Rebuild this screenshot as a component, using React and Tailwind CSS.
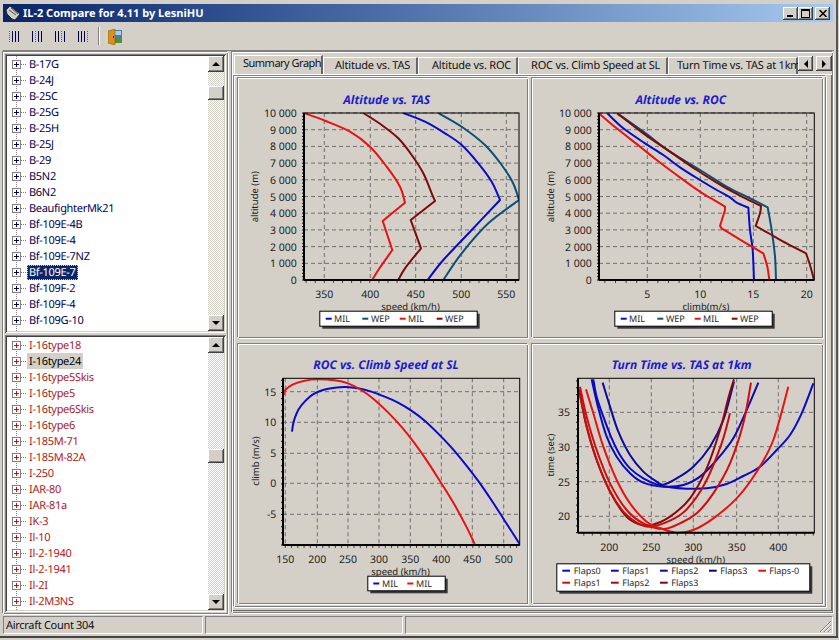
import React from "react";

const raised =
  "shadow-[inset_-1px_-1px_0_#404040,inset_1px_1px_0_#ffffff,inset_-2px_-2px_0_#808080,inset_2px_2px_0_#d4d0c8]";
const sunken =
  "shadow-[inset_1px_1px_0_#808080,inset_-1px_-1px_0_#ffffff,inset_2px_2px_0_#404040,inset_-2px_-2px_0_#d4d0c8]";
const groove =
  "shadow-[inset_1px_1px_0_#ffffff,inset_-1px_-1px_0_#808080,-1px_-1px_0_#808080,1px_1px_0_#ffffff]";

const tree1 = [
  "B-17G", "B-24J", "B-25C", "B-25G", "B-25H", "B-25J", "B-29", "B5N2", "B6N2",
  "BeaufighterMk21", "Bf-109E-4B", "Bf-109E-4", "Bf-109E-7NZ", "Bf-109E-7",
  "Bf-109F-2", "Bf-109F-4", "Bf-109G-10", "Bf-109G-14",
];
const tree2 = [
  "I-16type18", "I-16type24", "I-16type5Skis", "I-16type5", "I-16type6Skis", "I-16type6",
  "I-185M-71", "I-185M-82A", "I-250", "IAR-80", "IAR-81a", "IK-3", "Il-10",
  "Il-2-1940", "Il-2-1941", "Il-2I", "Il-2M3NS",
];

const BLUE = "#0a0acb";
const TEAL = "#0c4f78";
const RED = "#e81212";
const DARK = "#7d0a0a";

// curves are read off the reference at 3x, ox/oy move them back to page pixels
const toPage = (pts, ox, oy) => pts.map(([x, y, c]) => [ox + x / 3, oy + y / 3, c]);

// a third value on a point (1) marks a sharp corner, the rest is smoothed
const linePath = (pts) => {
  let d = `M${pts[0][0]} ${pts[0][1]}`;
  for (let i = 0; i < pts.length - 1; i++) {
    const b = pts[i];
    const c = pts[i + 1];
    const a = b[2] ? b : pts[i - 1] || b;
    const e = c[2] ? c : pts[i + 2] || c;
    d += `C${b[0] + (c[0] - a[0]) / 6} ${b[1] + (c[1] - a[1]) / 6} ${c[0] - (e[0] - b[0]) / 6} ${c[1] - (e[1] - b[1]) / 6} ${c[0]} ${c[1]}`;
  }
  return d;
};

const altTicks = [0, 1, 2, 3, 4, 5, 6, 7, 8, 9, 10].map((k) => ({
  pos: 280 - k * 16.7,
  label: k === 0 ? "0" : k === 10 ? "10 000" : `${k} 000`,
}));

const charts = [
  {
    key: "tas",
    left: 238, top: 78, width: 290, height: 260,
    title: "Altitude vs. TAS", titleX: 386.7, titleY: 100,
    plot: { x0: 304, x1: 519, y0: 113, y1: 280 },
    xTicks: [[324.3, "350"], [370.3, "400"], [415.7, "450"], [461.3, "500"], [506.3, "550"]],
    yTicks: altTicks,
    yRight: 296.7, xTickY: 294,
    xTitle: "speed (km/h)", xTitleX: 410.5, xTitleY: 307.3,
    yTitle: "altitude (m)", yTitleX: 255, yTitleY: 196.7,
    minorX: 9.1, minorY: 3.34,
    legend: { x: 319.3, y: 310.7, w: 157.4, h: 15 },
    items: [[325.7, 331.7, 334, "MIL", BLUE, 0], [362.3, 368.3, 371, "WEP", TEAL, 0], [399.7, 405.7, 408, "MIL", RED, 0], [436.7, 442.5, 445, "WEP", DARK, 0]],
    series: [
      { color: RED, pts: [[304, 113], [325, 120.7], [350, 131.7], [370, 146.7], [386.7, 166.7], [400, 186.7], [405, 202.7, 1], [382.7, 221, 1], [392.3, 250, 1], [378.3, 270], [372.3, 280]] },
      { color: DARK, pts: [[363.3, 113], [381.7, 125], [398.3, 138.3], [411.7, 155], [423.3, 173.3], [431.7, 193.3], [435, 201, 1], [410.7, 220, 1], [421, 248.3, 1], [405, 268.3], [398.3, 280]] },
      { color: BLUE, pts: [[403.3, 113], [425, 121.7], [445, 133.3], [461.7, 145], [478.3, 163.3], [491.7, 181.7], [500, 200, 1], [471.7, 230], [443.3, 260], [427.7, 280]] },
      { color: TEAL, pts: [[438.3, 113], [461.7, 126.7], [485, 145], [501.7, 165], [513, 183], [519, 200, 1], [488.3, 223.3], [461.7, 253.3], [443.3, 280]] },
    ],
  },
  {
    key: "roc",
    left: 532, top: 78, width: 291, height: 260,
    title: "Altitude vs. ROC", titleX: 680.8, titleY: 100,
    plot: { x0: 599, x1: 814.3, y0: 113, y1: 280 },
    xTicks: [[647.3, "5"], [700.3, "10"], [753.3, "15"], [806.7, "20"]],
    yTicks: altTicks,
    yRight: 591.7, xTickY: 294,
    xTitle: "climb(m/s)", xTitleX: 706, xTitleY: 307.3,
    yTitle: "altitude (m)", yTitleX: 550.7, yTitleY: 196.7,
    minorX: 10.6, minorY: 3.34,
    legend: { x: 614.3, y: 310.7, w: 157.4, h: 15 },
    items: [[620.7, 626.7, 629, "MIL", BLUE, 0], [657.3, 663.3, 666, "WEP", TEAL, 0], [694.7, 700.7, 703, "MIL", RED, 0], [731.7, 737.5, 740, "WEP", DARK, 0]],
    series: [
      { color: BLUE, z: [[232, 70], [280, 115], [345, 160], [400, 195], [450, 232], [510, 270], [560, 300], [600, 322], [620, 338], [655, 353, 1], [660, 420], [668, 480], [672, 570]] },
      { color: TEAL, z: [[262, 70], [340, 125], [420, 185], [510, 240], [590, 290], [650, 320], [680, 335], [713, 352, 1], [725, 420], [735, 500], [738, 570]] },
      { color: RED, z: [[207, 70], [260, 115], [330, 170], [380, 210], [440, 255], [510, 305], [560, 335], [585, 350, 1], [585, 360, 1], [570, 408, 1], [575, 415, 1], [640, 455], [700, 490, 1], [712, 530], [718, 570]] },
      { color: DARK, z: [[262, 70], [340, 130], [420, 185], [500, 240], [580, 290], [640, 322], [693, 348, 1], [690, 370], [677, 408, 1], [720, 432], [770, 460], [828, 490, 1], [840, 525], [852, 570]] },
    ],
    ox: 530, oy: 90,
  },
  {
    key: "speed",
    left: 238, top: 344, width: 290, height: 260,
    title: "ROC vs. Climb Speed at SL", titleX: 386, titleY: 365,
    plot: { x0: 283, x1: 519.7, y0: 378.3, y1: 545 },
    xTicks: [[285.3, "150"], [317.3, "200"], [348, "250"], [379, "300"], [410.3, "350"], [441.3, "400"], [472.3, "450"], [503.7, "500"]],
    yTicks: [[391.7, "15"], [422.3, "10"], [453.3, "5"], [483.3, "0"], [514.3, "-5"]].map(([pos, label]) => ({ pos, label })),
    yRight: 276.3, xTickY: 559.3,
    xTitle: "speed (km/h)", xTitleX: 400.5, xTitleY: 571.7,
    yTitle: "climb (m/s)", yTitleX: 255.7, yTitleY: 461,
    minorX: 6.25, minorY: 6.1,
    legend: { x: 367.3, y: 575.7, w: 77.4, h: 14.6 },
    items: [[373.3, 379.3, 382, "MIL", BLUE, 0], [407.3, 413.3, 416, "MIL", RED, 0]],
    series: [
      { color: BLUE, z: [[162, 245], [165, 225], [170, 205], [182, 178], [200, 155], [225, 133], [255, 120], [290, 113], [325, 111], [360, 115], [400, 125], [440, 140], [480, 158], [520, 182], [560, 212], [600, 250], [640, 292], [680, 340], [720, 392], [760, 450], [800, 512], [845, 582]] },
      { color: RED, z: [[137, 135], [142, 120], [165, 103], [200, 92], [240, 88], [290, 91], [330, 100], [370, 120], [410, 150], [450, 187], [490, 230], [530, 280], [570, 337], [610, 400], [650, 465], [685, 530], [710, 582]] },
    ],
    ox: 238, oy: 350,
  },
  {
    key: "turn",
    left: 532, top: 344, width: 291, height: 260,
    title: "Turn Time vs. TAS at 1km", titleX: 681.7, titleY: 365,
    plot: { x0: 578, x1: 814.3, y0: 378.3, y1: 532.7 },
    xTicks: [[609.3, "200"], [651.3, "250"], [693.3, "300"], [736.7, "350"], [778.3, "400"]],
    yTicks: [[412.3, "35"], [446.7, "30"], [481.7, "25"], [516.3, "20"]].map(([pos, label]) => ({ pos, label })),
    yRight: 570, xTickY: 546.7,
    xTitle: "speed (km/h)", xTitleX: 695.8, xTitleY: 560,
    yTitle: "time (sec)", yTitleX: 550.7, yTitleY: 455,
    minorX: 8.5, minorY: 6.9,
    legend: { x: 556.3, y: 563.3, w: 253, h: 27.4 },
    items: [
      [562.3, 570, 573.7, "Flaps0", "#0a0acb", 570.7], [611, 618.7, 622.3, "Flaps1", "#0a0ab8", 570.7],
      [660, 667.7, 671.3, "Flaps2", "#0a0a9c", 570.7], [709, 716.7, 720.3, "Flaps3", "#06066e", 570.7],
      [758.3, 766, 769.3, "Flaps-0", "#e81212", 570.7], [562.3, 570, 573.7, "Flaps1", "#cc0c0c", 582.7],
      [611, 618.7, 622.3, "Flaps2", "#a80a0a", 582.7], [660, 667.7, 671.3, "Flaps3", "#7d0a0a", 582.7],
    ],
    series: [
      { color: "#0a0acb", z: [[190, 88], [200, 140], [220, 200], [245, 265], [270, 315], [300, 355], [340, 385], [380, 403], [420, 412], [470, 416], [530, 415], [590, 402], [640, 378], [690, 350], [740, 300], [780, 255], [815, 190], [850, 100]] },
      { color: "#0a0ab8", z: [[185, 88], [205, 175], [230, 260], [260, 320], [300, 370], [340, 398], [400, 410], [460, 405], [510, 380], [560, 330], [610, 265], [650, 180], [685, 98]] },
      { color: "#0a0a9c", z: [[218, 98], [240, 170], [265, 245], [300, 315], [340, 365], [380, 395], [400, 404], [440, 385], [490, 350], [540, 290], [580, 210], [612, 95]] },
      { color: "#8a0a0a", z: [[148, 125], [170, 230], [200, 330], [240, 425], [285, 495], [325, 522], [365, 525], [420, 500], [480, 445], [530, 355], [570, 240], [596, 140], [612, 88]] },
      { color: "#c80c0c", z: [[148, 118], [168, 222], [198, 324], [238, 420], [280, 485], [320, 518], [360, 530], [420, 512], [470, 478], [525, 400], [575, 280], [600, 190]] },
      { color: "#d40c0c", z: [[150, 110], [170, 200], [200, 300], [240, 400], [290, 480], [340, 520], [400, 537], [450, 520], [500, 490], [550, 430], [600, 340], [640, 220], [663, 98]] },
      { color: "#e81212", z: [[168, 118], [190, 190], [220, 290], [260, 390], [300, 460], [350, 515], [400, 538], [440, 548], [490, 540], [550, 505], [620, 445], [680, 365], [730, 270], [775, 110]] },
    ],
    ox: 530, oy: 350,
  },
];

function Chart({ c }) {
  const { plot, legend } = c;
  const clipId = `clip-${c.key}`;
  const minorXs = [];
  for (let x = c.xTicks[0][0] % c.minorX; x < plot.x1; x += c.minorX) {
    if (x > plot.x0) minorXs.push(x);
  }
  const minorYs = [];
  for (let y = plot.y1; y > plot.y0; y -= c.minorY) minorYs.push(y);

  return (
    <div className={`relative bg-[#d4d0c8] ${groove}`}>
      <svg
        className="absolute inset-0"
        width={c.width}
        height={c.height}
        viewBox={`${c.left} ${c.top} ${c.width} ${c.height}`}
      >
        <defs>
          <clipPath id={clipId}>
            <rect x={plot.x0} y={plot.y0} width={plot.x1 - plot.x0} height={plot.y1 - plot.y0} />
          </clipPath>
        </defs>
        <text x={c.titleX} y={c.titleY + 4} textAnchor="middle" fontSize="12" fontWeight="700" fontStyle="italic" fill="#1c1ccf">
          {c.title}
        </text>

        {c.xTicks.map(([x]) => (
          <line key={x} x1={x} x2={x} y1={plot.y0} y2={plot.y1} stroke="#6e6e6e" strokeDasharray="4 3" />
        ))}
        {c.yTicks.map((t) => (
          <line key={t.pos} x1={plot.x0} x2={plot.x1} y1={t.pos} y2={t.pos} stroke="#6e6e6e" strokeDasharray="4 3" />
        ))}

        <g clipPath={`url(#${clipId})`} fill="none" strokeWidth="2" strokeLinejoin="round">
          {c.series.map((s, i) => (
            <path key={i} d={linePath(s.pts || toPage(s.z, c.ox, c.oy))} stroke={s.color} />
          ))}
        </g>

        {minorXs.map((x) => (
          <line key={x} x1={x} x2={x} y1={plot.y1} y2={plot.y1 + 3} stroke="#444" />
        ))}
        {minorYs.map((y) => (
          <line key={y} x1={plot.x0 - 2} x2={plot.x0} y1={y} y2={y} stroke="#111" />
        ))}
        <rect x={plot.x0} y={plot.y0} width={plot.x1 - plot.x0} height={plot.y1 - plot.y0} fill="none" stroke="#000" />
        <line x1={plot.x0} x2={plot.x0} y1={plot.y0} y2={plot.y1} stroke="#000" strokeWidth="2" />
        <line x1={plot.x0} x2={plot.x1} y1={plot.y1} y2={plot.y1} stroke="#000" strokeWidth="2" />

        <g fontSize="10.5" fill="#1c1c1c">
          {c.yTicks.map((t) => (
            <text key={t.label} x={c.yRight} y={t.pos + 4} textAnchor="end">{t.label}</text>
          ))}
          {c.xTicks.map(([x, label]) => (
            <text key={label} x={x} y={c.xTickY + 4} textAnchor="middle">{label}</text>
          ))}
        </g>
        <text x={c.xTitleX} y={c.xTitleY + 3} textAnchor="middle" fontSize="9.5" fill="#1c1c1c">{c.xTitle}</text>
        <text
          transform={`translate(${c.yTitleX} ${c.yTitleY}) rotate(-90)`}
          y="3"
          textAnchor="middle"
          fontSize="9.5"
          fill="#1c1c1c"
        >
          {c.yTitle}
        </text>

        <rect x={legend.x + 3} y={legend.y + 3} width={legend.w} height={legend.h} fill="#3a3a3a" />
        <rect x={legend.x + 0.5} y={legend.y + 0.5} width={legend.w} height={legend.h} fill="#fff" stroke="#000" />
        {c.items.map(([x1, x2, tx, label, color, rowY], i) => {
          const y = rowY || legend.y + legend.h / 2 + 0.5;
          return (
            <g key={i}>
              <line x1={x1} x2={x2} y1={y} y2={y} stroke={color} strokeWidth="2" />
              <text x={tx} y={y + 3.2} fontSize="9" fill="#2a2a2a">{label}</text>
            </g>
          );
        })}
      </svg>
    </div>
  );
}

function ScrollBar({ thumbTop }) {
  return (
    <div className="relative w-[16px] h-full shrink-0 bg-[repeating-conic-gradient(#ffffff_0_25%,#d4d0c8_0_50%)] bg-size-[2px_2px]">
      <div className={`absolute top-0 left-0 w-[16px] h-[16px] bg-[#d4d0c8] ${raised} flex items-center justify-center`}>
        <div className="w-0 h-0 border-x-[4px] border-x-transparent border-b-[4px] border-b-black" />
      </div>
      <div className={`absolute left-0 w-[16px] h-[14px] bg-[#d4d0c8] ${raised}`} style={{ top: thumbTop }} />
      <div className={`absolute bottom-0 left-0 w-[16px] h-[16px] bg-[#d4d0c8] ${raised} flex items-center justify-center`}>
        <div className="w-0 h-0 border-x-[4px] border-x-transparent border-t-[4px] border-t-black" />
      </div>
    </div>
  );
}

function TreeRow({ name, plus, text, state }) {
  return (
    <div className="relative flex items-center h-[16px] pl-[5px] shrink-0 whitespace-nowrap">
      <div className="w-[9px] h-[9px] shrink-0 border border-[#808080] bg-white flex items-center justify-center relative z-10">
        <div className={`w-[5px] h-[1px] absolute ${plus}`} />
        <div className={`w-[1px] h-[5px] absolute ${plus}`} />
      </div>
      <div className="w-[5px] border-t border-dotted border-[#808080]" />
      {state === "focus" && (
        <span className="ml-[1px] px-[2px] h-[15px] leading-[16px] bg-[#0a246a] text-white outline-1 outline-dotted outline-[#d4d0c8] -outline-offset-1">{name}</span>
      )}
      {state === "gray" && (
        <span className="ml-[1px] px-[2px] h-[16px] leading-[17px] bg-[#d4d0c8] text-black">{name}</span>
      )}
      {!state && <span className={`ml-[3px] relative top-[1px] ${text}`}>{name}</span>}
    </div>
  );
}

function TreePane({ names, plus, text, states, thumbTop, className }) {
  return (
    <div className={`relative flex bg-white p-[2px] ${sunken} ${className}`}>
      <div className="relative flex-1 overflow-hidden tracking-[-0.3px] text-[11px]">
        <div className="absolute left-[9px] top-0 bottom-0 border-l border-dotted border-[#808080]" />
        <div className="flex flex-col">
          {names.map((n) => (
            <TreeRow key={n} name={n} plus={plus} text={text} state={states[n]} />
          ))}
        </div>
      </div>
      <ScrollBar thumbTop={thumbTop} />
    </div>
  );
}

const tabs = [
  { label: "Summary Graph", w: "w-[89px]", pl: "pl-[8px] tracking-[-0.5px]", active: true },
  { label: "Altitude vs. TAS", w: "w-[95px]", pl: "pl-[11px] tracking-[-0.2px]" },
  { label: "Altitude vs. ROC", w: "w-[100px]", pl: "pl-[13px] tracking-[-0.2px]" },
  { label: "ROC vs. Climb Speed at SL", w: "w-[150px]", pl: "pl-[12px] tracking-[-0.2px]" },
  { label: "Turn Time vs. TAS at 1km", w: "w-[130px]", pl: "pl-[8px] tracking-[-0.2px]" },
];

// four column bars, the dotted one is the column that icon stands for
function BarsIcon({ dotted, className }) {
  return (
    <svg className={className} width="11" height="11" viewBox="0 0 11 11" shapeRendering="crispEdges">
      {[0, 1, 2, 3].map((i) => (
        <line
          key={i}
          x1={i * 3 + 0.5}
          x2={i * 3 + 0.5}
          y1="0"
          y2="11"
          stroke={i === dotted ? "#5a5a80" : "#00004a"}
          strokeDasharray={i === dotted ? "1 1" : undefined}
        />
      ))}
    </svg>
  );
}

export default function App() {
  return (
    <div className="relative w-[839px] h-[640px] bg-[#d4d0c8] overflow-hidden [font-family:'Liberation_Sans',Arial,sans-serif] [text-rendering:geometricPrecision] text-[#111]">
      <div className="absolute right-[1px] top-0 bottom-[3px] w-[2px] bg-[#555]" />
      <div className="absolute left-0 right-[1px] bottom-[2px] h-[2px] bg-[#444]" />

      {/* title bar */}
      <div className="absolute left-[3px] top-[4px] w-[830px] h-[18px] flex items-center bg-linear-to-r from-[#0a246a] to-[#a6caf0]">
        <svg width="16" height="16" viewBox="0 0 16 16" className="ml-[2px]">
          <path d="M1 5 L5 1 L15 9 L10 15 L7 14 L2 9 Z" fill="#cfcfc4" stroke="#2a2a22" />
          <path d="M4 5 L11 10 M6 3 L13 9" stroke="#55554a" />
        </svg>
        <span className="ml-[2px] text-white font-bold text-[11px] [font-family:'DejaVu_Sans',sans-serif] leading-none whitespace-nowrap">
          IL-2 Compare for 4.11 by LesniHU
        </span>
        <div className="ml-auto flex items-center mr-[3px]">
          <button className={`w-[15px] h-[13px] bg-[#d4d0c8] ${raised} relative`}>
            <span className="absolute left-[4px] bottom-[3px] w-[6px] h-[2px] bg-black" />
          </button>
          <button className={`w-[15px] h-[13px] bg-[#d4d0c8] ${raised} relative`}>
            <span className="absolute left-[3px] top-[2px] w-[9px] h-[9px] border border-black border-t-2" />
          </button>
          <button className={`ml-[2px] w-[15px] h-[13px] bg-[#d4d0c8] ${raised} flex items-center justify-center`}>
            <svg width="8" height="7" viewBox="0 0 8 7">
              <path d="M0.5 0 L7.5 7 M7.5 0 L0.5 7" stroke="#000" strokeWidth="1.5" />
            </svg>
          </button>
        </div>
      </div>

      {/* toolbar */}
      <div className="absolute left-[3px] top-[22px] w-[831px] h-[29px] border-b border-[#808080]">
        <BarsIcon className="absolute left-[6px] top-[9px]" dotted={0} />
        <BarsIcon className="absolute left-[29px] top-[9px]" dotted={1} />
        <BarsIcon className="absolute left-[52px] top-[9px]" dotted={2} />
        <BarsIcon className="absolute left-[75px] top-[9px]" dotted={3} />
        <div className="absolute left-[95px] top-[5px] h-[18px] w-[2px] border-l border-[#808080] bg-white" />
        <svg className="absolute left-[105px] top-[7px]" width="14" height="16" viewBox="0 0 14 16">
          <rect x="5" y="1" width="9" height="13" fill="#3f7fc4" />
          <rect x="6" y="9" width="7" height="5" fill="#4c8f3c" />
          <rect x="6" y="2" width="7" height="4" fill="#a8cdf0" />
          <path d="M0 2 L7 0 L7 16 L0 14 Z" fill="#d8901c" stroke="#8a5a10" strokeWidth="0.6" />
          <rect x="5" y="7" width="1" height="2" fill="#4a2c06" />
        </svg>
      </div>

      {/* aircraft lists */}
      <div className={`absolute left-[3px] top-[52px] w-[225px] h-[562px] p-[2px] flex flex-col gap-[2px] ${groove}`}>
        <TreePane
          className="h-[279px]"
          names={tree1}
          plus="bg-[#000060]"
          text="text-[#000050]"
          states={{ "Bf-109E-7": "focus" }}
          thumbTop={30}
        />
        <TreePane
          className="h-[277px]"
          names={tree2}
          plus="bg-[#c01010]"
          text="text-[#b01818]"
          states={{ "I-16type24": "gray" }}
          thumbTop={112}
        />
      </div>

      {/* right side with tabs */}
      <div className={`absolute left-[232px] top-[52px] w-[601px] h-[561px] ${groove}`}>
        <div className="absolute left-[2px] top-[3px] w-[597px] h-[20px] flex overflow-hidden text-[11px]">
          {tabs.map((t) => (
            <div
              key={t.label}
              className={`${t.w} ${t.pl} shrink-0 whitespace-nowrap border-l border-white border-r-2 border-r-[#666] ${
                t.active ? "h-[20px] border-t pt-[1px] leading-[14px] bg-[#d4d0c8]" : "mt-[2px] h-[18px] border-t leading-[16px]"
              }`}
            >
              {t.label}
            </div>
          ))}
        </div>
        <div className={`absolute left-[566px] top-[4px] w-[15px] h-[15px] bg-[#d4d0c8] ${raised} flex items-center justify-center`}>
          <div className="w-0 h-0 border-y-[4px] border-y-transparent border-r-[4px] border-r-black" />
        </div>
        <div className={`absolute left-[584px] top-[4px] w-[16px] h-[15px] bg-[#d4d0c8] ${raised} flex items-center justify-center`}>
          <div className="w-0 h-0 border-y-[4px] border-y-transparent border-l-[4px] border-l-black" />
        </div>
        <div className="absolute left-[1px] top-[22px] w-[599px] h-[537px] border-t border-white shadow-[inset_-1px_-1px_0_#666]" />
        <div className={`absolute left-[2px] top-[24px] w-[592px] h-[531px] pl-[4px] pt-[2px] ${groove}`}>
          <div className="grid grid-cols-[290px_291px] grid-rows-[260px_260px] gap-x-[4px] gap-y-[6px]">
            {charts.map((c) => (
              <Chart key={c.key} c={c} />
            ))}
          </div>
        </div>
      </div>

      {/* status bar */}
      <div className="absolute left-[3px] top-[616px] w-[830px] h-[18px] flex gap-[2px] text-[11px] tracking-[-0.3px]">
        <div className="w-[200px] pl-[2px] leading-[17px] border border-[#808080] border-r-white border-b-white">Aircraft Count 304</div>
        <div className="w-[198px] border border-[#808080] border-r-white border-b-white" />
        <div className="relative flex-1 border border-[#808080] border-r-white border-b-white">
          <svg className="absolute right-0 bottom-0" width="13" height="13" viewBox="0 0 13 13">
            <path d="M12 1 L1 12 M12 5 L5 12 M12 9 L9 12" stroke="#808080" />
            <path d="M12 2 L2 12 M12 6 L6 12 M12 10 L10 12" stroke="#fff" />
          </svg>
        </div>
      </div>
    </div>
  );
}
